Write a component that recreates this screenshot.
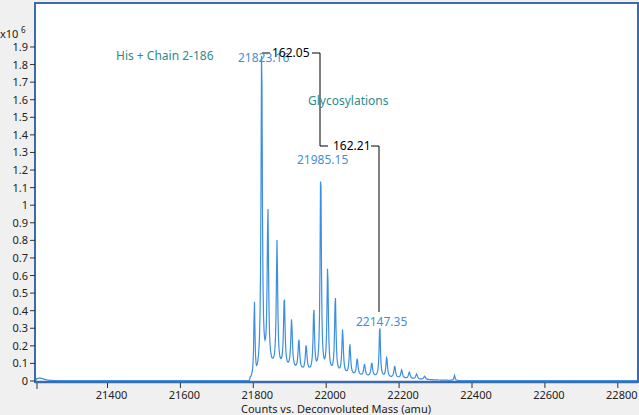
import React from "react";

const X = (m) => 107.5 + (m - 21400) * 0.3645;
const Y = (v) => 381 - v * 175.8;

const peaks = [
  [21803, 0.45, 1.0], [21823, 1.92, 1.1], [21840, 0.92, 1.2], [21865, 0.74, 1.2], [21885, 0.42, 1.3],
  [21905, 0.29, 1.4], [21925, 0.18, 1.4], [21945, 0.15, 1.4], [21966, 0.37, 1.2], [21985, 1.22, 1.1],
  [22004, 0.62, 1.2], [22025, 0.46, 1.2], [22045, 0.26, 1.3], [22065, 0.18, 1.3], [22085, 0.1, 1.4],
  [22105, 0.07, 1.4], [22125, 0.08, 1.4], [22147, 0.31, 1.1], [22166, 0.12, 1.3], [22188, 0.07, 1.4],
  [22207, 0.05, 1.4], [22228, 0.04, 1.4], [22248, 0.03, 1.4], [22270, 0.02, 1.4], [22352, 0.03, 1.0],
];

function spectrum() {
  const pts = [];
  for (let px = 36; px <= 637; px += 0.5) {
    const m = 21400 + (px - 107.5) / 0.3645;
    let v = 0;
    if (px > 36 && px < 90) v += 0.012 * Math.exp(-((px - 40) ** 2) / 30) + 0.004 * Math.max(0, 1 - (px - 40) / 50);
    if (m > 21808 && m < 22420) {
      const t = (m - 21808) / 612;
      v += 0.08 * Math.min(1, (m - 21808) / 15) * Math.exp(-t * 2.2) - 0.01 * t;
    }
    for (const [pm, h, w] of peaks) {
      const d = (px - X(pm)) / w;
      v += (h * 0.97) / (1 + d * d * 2.2);
    }
    if (m > 22420 || (m < 21790 && px > 90)) v = Math.max(0, v) * 0.2;
    pts.push(`${px.toFixed(1)},${Y(Math.max(v, 0.002)).toFixed(1)}`);
  }
  return "M" + pts.join(" L");
}

export default function App() {
  const yTicks = Array.from({ length: 20 }, (_, i) => i / 10);
  const xTicks = [21400, 21600, 21800, 22000, 22200, 22400, 22600, 22800];
  return (
    <div className="w-[639px] h-[415px] bg-[#f0f0f0] overflow-hidden font-['Liberation_Sans',Arial,sans-serif]">
      <svg width="639" height="415" viewBox="0 0 639 415">
        <rect x="35" y="3" width="603" height="379" fill="#fff" stroke="#3d6aa8" strokeWidth="2" />
        <line x1="35" y1="382" x2="638" y2="382" stroke="#3d6aa8" strokeWidth="2.5" />
        {yTicks.map((v) => (
          <g key={v}>
            <line x1="30" x2="35" y1={Y(v)} y2={Y(v)} stroke="#333" />
            <text x="28" y={Y(v) + 4} fontSize="11" textAnchor="end" fill="#222">
              {v === 0 ? "0" : v === 1 ? "1" : v.toFixed(1)}
            </text>
          </g>
        ))}
        <text x="0" y="38" fontSize="11" fill="#222">x10</text>
        <text x="21" y="33" fontSize="8" fill="#222">6</text>
        <line x1="37" x2="37" y1="383" y2="389" stroke="#333" />
        {xTicks.map((m) => (
          <g key={m}>
            <line x1={X(m)} x2={X(m)} y1="383" y2="388" stroke="#333" />
            <text x={X(m) + 4} y="399" fontSize="11" textAnchor="middle" fill="#222">{m}</text>
          </g>
        ))}
        <text x="336" y="413" fontSize="11" textAnchor="middle" fill="#222">Counts vs. Deconvoluted Mass (amu)</text>
        <path d={spectrum()} fill="none" stroke="#3c8fe0" strokeWidth="1.2" />
        <path d="M262 53 H270 M312 53 H320 V146 H328 M371 146 H379 V312" stroke="#000" strokeWidth="1" fill="none" />
        <text x="116" y="60" fontSize="12" fill="#2e8b8b">His + Chain 2-186</text>
        <text x="238" y="62" fontSize="12" fill="#3f8fd8">21823.16</text>
        <text x="272" y="57" fontSize="12" fill="#000">162.05</text>
        <text x="308" y="105" fontSize="12" fill="#2e8b8b">Glycosylations</text>
        <text x="333" y="150" fontSize="12" fill="#000">162.21</text>
        <text x="297" y="164" fontSize="12" fill="#3f8fd8">21985.15</text>
        <text x="356" y="326" fontSize="12" fill="#3f8fd8">22147.35</text>
      </svg>
    </div>
  );
}
